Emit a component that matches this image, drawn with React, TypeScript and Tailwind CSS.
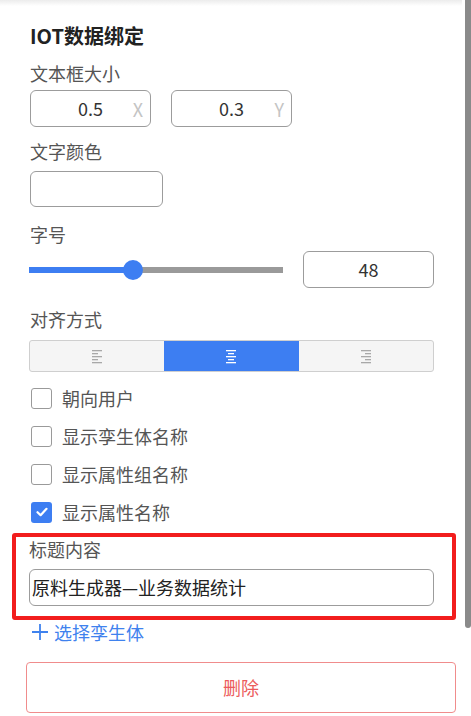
import React, { useState } from 'react';

// 对齐图标（左 / 中 / 右）
const AlignIcon: React.FC<{ mode: 'left' | 'center' | 'right'; color: string }> = ({ mode, color }) => {
  const rows = [10, 6, 10, 6, 10];
  return (
    <svg width="12" height="15" viewBox="0 0 12 15">
      {rows.map((w, i) => {
        const x = mode === 'left' ? 1 : mode === 'right' ? 11 - w : 6 - w / 2;
        return <rect key={i} x={x} y={1 + i * 3} width={w} height="1.3" fill={color} />;
      })}
    </svg>
  );
};

const Checkbox: React.FC<{ checked: boolean; label: string }> = ({ checked, label }) => (
  <div className="flex items-center h-[38px]">
    {checked ? (
      <div className="w-[21px] h-[21px] ml-[1px] rounded-[3px] bg-[#3d7ef2] flex items-center justify-center">
        <svg width="14" height="14" viewBox="0 0 14 14">
          <path d="M2.5 7.2 L5.6 10.2 L11.5 3.8" stroke="#fff" strokeWidth="2.2" fill="none" strokeLinecap="round" strokeLinejoin="round" />
        </svg>
      </div>
    ) : (
      <div className="w-[21px] h-[21px] ml-[1px] rounded-[3px] border-[1.5px] border-[#9a9a9a] bg-white" />
    )}
    <span className="ml-[10px] text-[18px] leading-[24px] text-[#555]">{label}</span>
  </div>
);

const App: React.FC = () => {
  const [align] = useState<'left' | 'center' | 'right'>('center');
  const fontSize = 48;
  const pct = 41; // 滑块位置

  return (
    <div
      className="relative w-[471px] h-[716px] bg-white overflow-hidden"
      style={{ fontFamily: '"Noto Sans CJK SC", "Noto Sans", sans-serif' }}
    >
      <div className="h-[6px] w-[462px] bg-gradient-to-b from-[#ececec] to-white" />

      <div className="pl-[30px] w-[434px]">
        <div className="mt-[18px] text-[20px] leading-[24px] font-bold text-[#222]">IOT数据绑定</div>

        {/* 文本框大小 */}
        <div className="mt-[13px] text-[18px] leading-[24px] text-[#555]">文本框大小</div>
        <div className="mt-[5px] flex gap-[20px]">
          {[
            { v: '0.5', s: 'X' },
            { v: '0.3', s: 'Y' },
          ].map((f) => (
            <div
              key={f.s}
              className="relative w-[121px] h-[37px] rounded-[6px] border border-[#9c9c9c] flex items-center justify-center"
            >
              <span className="text-[18px] text-[#333]">{f.v}</span>
              <span className="absolute right-[7px] top-[6px] text-[18px] leading-[24px] text-[#c4c4c4]">{f.s}</span>
            </div>
          ))}
        </div>

        {/* 文字颜色 */}
        <div className="mt-[12px] text-[18px] leading-[24px] text-[#555]">文字颜色</div>
        <div className="mt-[8px] w-[133px] h-[36px] rounded-[6px] border border-[#9c9c9c]" />

        {/* 字号 */}
        <div className="mt-[15px] text-[18px] leading-[24px] text-[#555]">字号</div>
        <div className="mt-[5px] flex items-center">
          <div className="relative w-[254px] h-[6px] ml-[-1px] bg-[#9a9a9a]">
            <div className="h-full bg-[#3d7ef2]" style={{ width: `${pct}%` }} />
            <div
              className="absolute top-[-7px] w-[20px] h-[20px] rounded-full bg-[#3d7ef2]"
              style={{ left: `calc(${pct}% - 10px)` }}
            />
          </div>
          <div className="ml-auto w-[131px] h-[37px] rounded-[6px] border border-[#9c9c9c] flex items-center justify-center text-[18px] text-[#333]">
            {fontSize}
          </div>
        </div>

        {/* 对齐方式 */}
        <div className="mt-[19px] text-[18px] leading-[24px] text-[#555]">对齐方式</div>
        <div className="mt-[9px] ml-[-1px] w-[405px] h-[32px] flex rounded-[3px] border border-[#cfcfcf] bg-[#f5f5f5] overflow-hidden">
          {(['left', 'center', 'right'] as const).map((m) => (
            <div
              key={m}
              className={`flex-1 flex items-center justify-center ${
                align === m ? 'bg-[#3d7ef2]' : ''
              } ${m === 'center' ? '' : ''}`}
            >
              <AlignIcon mode={m} color={align === m ? '#ffffff' : '#a8a8a8'} />
            </div>
          ))}
        </div>

        {/* 复选项 */}
        <div className="mt-[7px] flex flex-col">
          <Checkbox checked={false} label="朝向用户" />
          <Checkbox checked={false} label="显示孪生体名称" />
          <Checkbox checked={false} label="显示属性组名称" />
          <Checkbox checked label="显示属性名称" />
        </div>

        {/* 标题内容（红框标注） */}
        <div className="mt-[2px] ml-[-18px] w-[444px] border-4 border-[#f21d1d] rounded-[3px] pl-[13px] pr-[18px] pb-[10px]">
          <div className="text-[18px] leading-[24px] text-[#555]">标题内容</div>
          <div className="mt-[8px] h-[37px] rounded-[6px] border border-[#9c9c9c] flex items-center pl-[2px] text-[18px] text-[#222]">
            原料生成器—业务数据统计
          </div>
        </div>

        <div className="flex items-center h-[24px] text-[#3f82ee]">
          <svg width="18" height="18" viewBox="0 0 18 18" className="ml-[1px]">
            <path d="M9 1 V17 M1 9 H17" stroke="#3f82ee" strokeWidth="1.8" />
          </svg>
          <span className="ml-[5px] text-[18px] leading-[24px]">选择孪生体</span>
        </div>

        <button
          type="button"
          className="mt-[18px] ml-[-4px] w-[430px] h-[51px] rounded-[4px] border-[1.5px] border-[#f08c8c] bg-white text-[18px] text-[#ec5b5b]"
        >
          删除
        </button>
      </div>

      {/* 滚动条 */}
      <div className="absolute right-0 top-0 w-[6px] h-[628px] rounded-b-[3px] bg-[#8a8a8a]" />
    </div>
  );
};

export default App;
